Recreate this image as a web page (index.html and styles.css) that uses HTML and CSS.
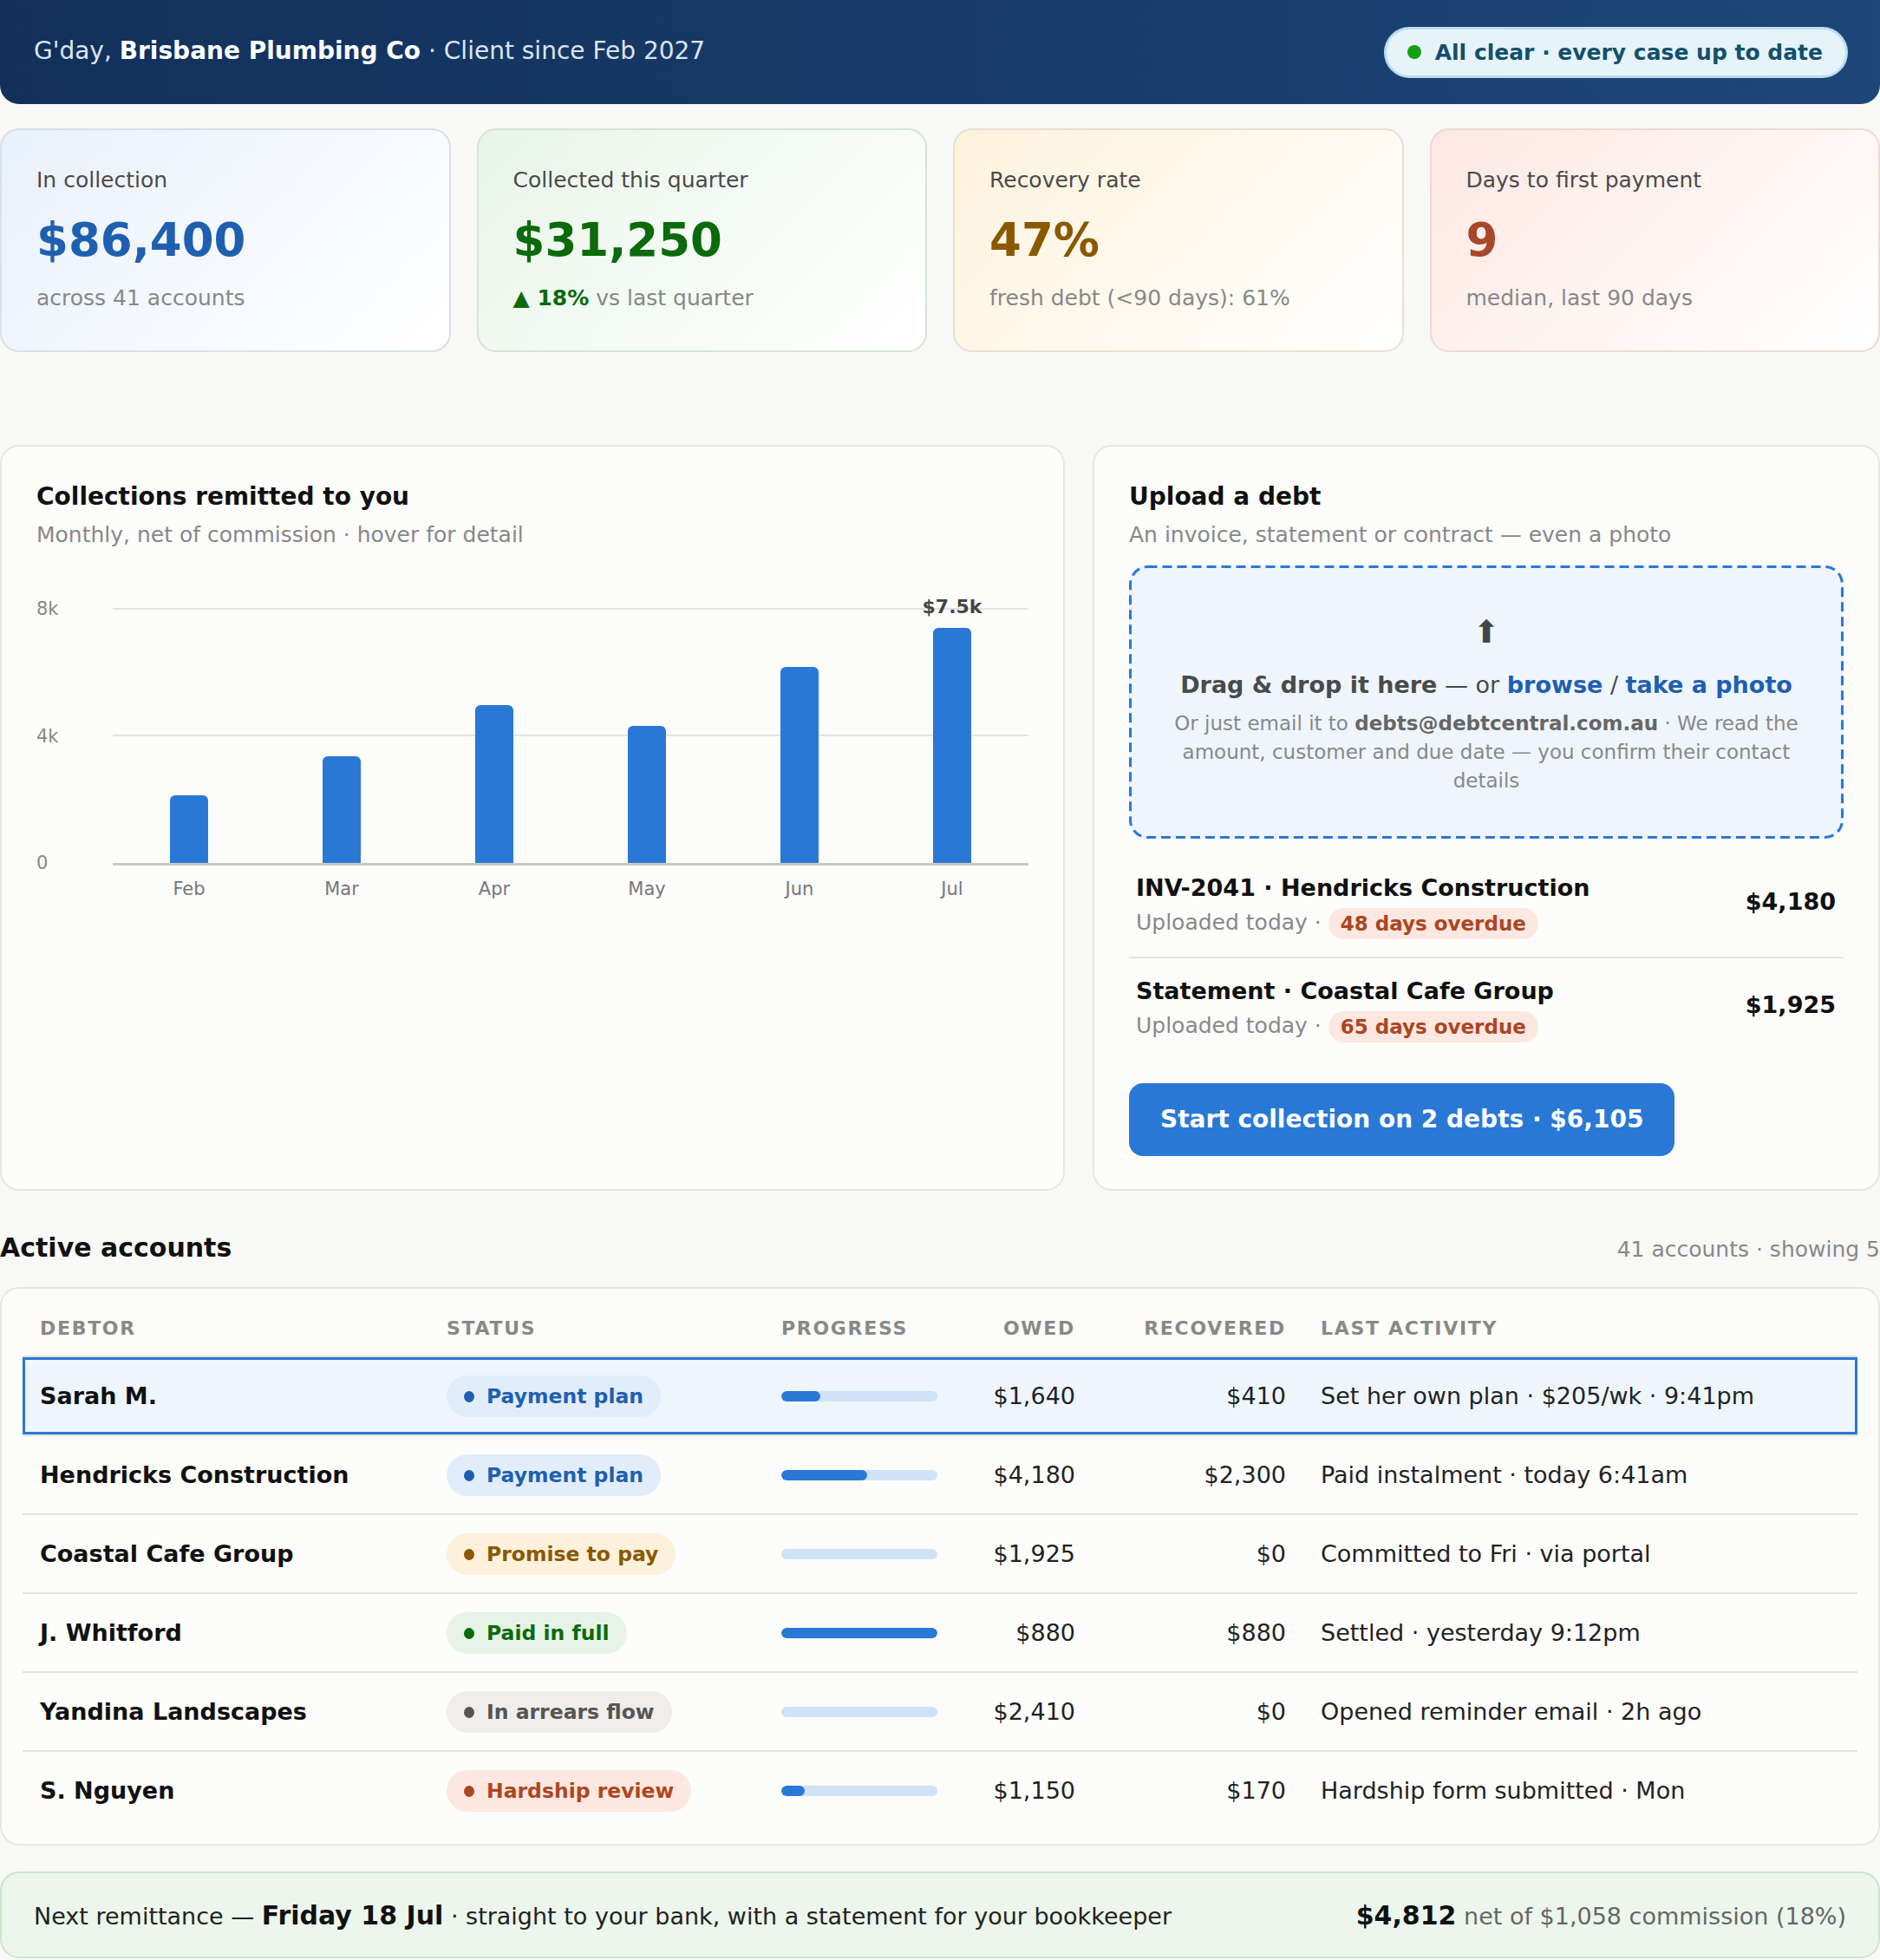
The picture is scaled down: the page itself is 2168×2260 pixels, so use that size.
FILE: index.html
```html
<!DOCTYPE html>
<html>
<head>
   <meta charset="UTF-8">
   <title>Client portal - Brisbane Plumbing Co</title>
   <link rel="stylesheet" href="styles.css">
</head>
<body>
   <header class="topbar">
      <div class="greeting">G'day, <b>Brisbane Plumbing Co</b> · Client since Feb 2027</div>
      <div class="status-pill"><span class="status-dot"></span>All clear · every case up to date</div>
   </header>

   <section class="kpis">
      <div class="kpi kpi-blue">
         <div class="kpi-label">In collection</div>
         <div class="kpi-value">$86,400</div>
         <div class="kpi-sub">across 41 accounts</div>
      </div>
      <div class="kpi kpi-green">
         <div class="kpi-label">Collected this quarter</div>
         <div class="kpi-value">$31,250</div>
         <div class="kpi-sub"><span class="up">▲ 18%</span> vs last quarter</div>
      </div>
      <div class="kpi kpi-amber">
         <div class="kpi-label">Recovery rate</div>
         <div class="kpi-value">47%</div>
         <div class="kpi-sub">fresh debt (&lt;90 days): 61%</div>
      </div>
      <div class="kpi kpi-red">
         <div class="kpi-label">Days to first payment</div>
         <div class="kpi-value">9</div>
         <div class="kpi-sub">median, last 90 days</div>
      </div>
   </section>

   <section class="panels">
      <div class="panel chart-panel">
         <div class="panel-title">Collections remitted to you</div>
         <div class="panel-sub">Monthly, net of commission · hover for detail</div>
         <div class="chart">
            <div class="y-axis">
               <span>8k</span>
               <span>4k</span>
               <span>0</span>
            </div>
            <div class="plot">
               <div class="grid-line grid-top"></div>
               <div class="grid-line grid-mid"></div>
               <div class="bars">
                  <div class="bar-col"><div class="bar" style="height: 26.5%"></div></div>
                  <div class="bar-col"><div class="bar" style="height: 42%"></div></div>
                  <div class="bar-col"><div class="bar" style="height: 62%"></div></div>
                  <div class="bar-col"><div class="bar" style="height: 54%"></div></div>
                  <div class="bar-col"><div class="bar" style="height: 77%"></div></div>
                  <div class="bar-col"><div class="bar" style="height: 92.5%"><span class="bar-tip">$7.5k</span></div></div>
               </div>
            </div>
         </div>
         <div class="months">
            <span>Feb</span><span>Mar</span><span>Apr</span><span>May</span><span>Jun</span><span>Jul</span>
         </div>
      </div>

      <div class="panel upload-panel">
         <div class="panel-title">Upload a debt</div>
         <div class="panel-sub">An invoice, statement or contract — even a photo</div>
         <div class="dropzone">
            <svg class="dash-border" aria-hidden="true"><rect></rect></svg>
            <div class="drop-arrow">⬆</div>
            <div class="drop-main"><b>Drag &amp; drop it here</b> — or <a href="#">browse</a> / <a href="#">take a photo</a></div>
            <p class="drop-note">Or just email it to <b>debts@debtcentral.com.au</b> · We read the amount, customer and due date — you confirm their contact details</p>
         </div>
         <div class="debt-item">
            <div>
               <div class="debt-title">INV-2041 · Hendricks Construction</div>
               <div class="debt-meta">Uploaded today · <span class="tag tag-red">48 days overdue</span></div>
            </div>
            <div class="debt-amount">$4,180</div>
         </div>
         <div class="debt-item">
            <div>
               <div class="debt-title">Statement · Coastal Cafe Group</div>
               <div class="debt-meta">Uploaded today · <span class="tag tag-red">65 days overdue</span></div>
            </div>
            <div class="debt-amount">$1,925</div>
         </div>
         <button class="start-btn">Start collection on 2 debts · $6,105</button>
      </div>
   </section>

   <section class="accounts">
      <div class="accounts-head">
         <h2>Active accounts</h2>
         <span class="accounts-count">41 accounts · showing 5</span>
      </div>
      <div class="table-card">
         <table class="accounts-table">
            <colgroup>
               <col style="width: 469px">
               <col style="width: 386px">
               <col style="width: 219px">
               <col style="width: 160px">
               <col style="width: 243px">
               <col>
            </colgroup>
            <thead>
               <tr>
                  <th>Debtor</th>
                  <th>Status</th>
                  <th>Progress</th>
                  <th class="num">Owed</th>
                  <th class="num">Recovered</th>
                  <th>Last activity</th>
               </tr>
            </thead>
            <tbody>
               <tr class="selected">
                  <td class="debtor">Sarah M.</td>
                  <td><span class="tag tag-blue"><i class="dot"></i>Payment plan</span></td>
                  <td><div class="track"><div class="fill" style="width: 25%"></div></div></td>
                  <td class="num">$1,640</td>
                  <td class="num">$410</td>
                  <td>Set her own plan · $205/wk · 9:41pm</td>
               </tr>
               <tr>
                  <td class="debtor">Hendricks Construction</td>
                  <td><span class="tag tag-blue"><i class="dot"></i>Payment plan</span></td>
                  <td><div class="track"><div class="fill" style="width: 55%"></div></div></td>
                  <td class="num">$4,180</td>
                  <td class="num">$2,300</td>
                  <td>Paid instalment · today 6:41am</td>
               </tr>
               <tr>
                  <td class="debtor">Coastal Cafe Group</td>
                  <td><span class="tag tag-amber"><i class="dot"></i>Promise to pay</span></td>
                  <td><div class="track"><div class="fill" style="width: 0%"></div></div></td>
                  <td class="num">$1,925</td>
                  <td class="num">$0</td>
                  <td>Committed to Fri · via portal</td>
               </tr>
               <tr>
                  <td class="debtor">J. Whitford</td>
                  <td><span class="tag tag-green"><i class="dot"></i>Paid in full</span></td>
                  <td><div class="track"><div class="fill" style="width: 100%"></div></div></td>
                  <td class="num">$880</td>
                  <td class="num">$880</td>
                  <td>Settled · yesterday 9:12pm</td>
               </tr>
               <tr>
                  <td class="debtor">Yandina Landscapes</td>
                  <td><span class="tag tag-grey"><i class="dot"></i>In arrears flow</span></td>
                  <td><div class="track"><div class="fill" style="width: 0%"></div></div></td>
                  <td class="num">$2,410</td>
                  <td class="num">$0</td>
                  <td>Opened reminder email · 2h ago</td>
               </tr>
               <tr>
                  <td class="debtor">S. Nguyen</td>
                  <td><span class="tag tag-red"><i class="dot"></i>Hardship review</span></td>
                  <td><div class="track"><div class="fill" style="width: 15%"></div></div></td>
                  <td class="num">$1,150</td>
                  <td class="num">$170</td>
                  <td>Hardship form submitted · Mon</td>
               </tr>
            </tbody>
         </table>
      </div>
   </section>

   <footer class="remit">
      <div>Next remittance — <b class="remit-date">Friday 18 Jul</b> · straight to your bank, with a statement for your bookkeeper</div>
      <div><b class="remit-amount">$4,812</b> <span class="remit-net">net of $1,058 commission (18%)</span></div>
   </footer>
</body>
</html>
```

FILE: styles.css
```css
body {
   margin: 0;
   background-color: #f8f8f6;
   font-family: "DejaVu Sans", Verdana, sans-serif;
   color: #1a1a1a;
}

/* top bar */
.topbar {
   height: 120px;
   box-sizing: border-box;
   padding: 0 37px 0 39px;
   display: flex;
   align-items: center;
   justify-content: space-between;
   background: linear-gradient(90deg, #12305a, #1d4679);
   border-radius: 0 0 22px 22px;
}
.greeting {
   font-size: 28px;
   color: #dbe5f1;
   margin-top: -4px;
}
.greeting b {
   color: #fff;
}
.status-pill {
   display: flex;
   align-items: center;
   padding: 12px 26px 12px 24px;
   border: 3px solid #bcdcee;
   border-radius: 40px;
   background-color: #e6f3fa;
   color: #12506b;
   font-size: 25px;
   font-weight: bold;
   line-height: 29px;
}
.status-dot {
   width: 16px;
   height: 16px;
   border-radius: 50%;
   background-color: #12a012;
   margin-right: 16px;
}

/* kpi cards */
.kpis {
   display: grid;
   grid-template-columns: repeat(4, 1fr);
   gap: 30px;
   margin-top: 28px;
}
.kpi {
   border: 2px solid #d8e0e8;
   border-radius: 22px;
   padding: 42px 40px 44px 40px;
}
.kpi-blue {
   background: linear-gradient(135deg, #e9f1fc, #ffffff);
}
.kpi-green {
   background: linear-gradient(135deg, #e9f5e9, #ffffff);
   border-color: #d6e4d6;
}
.kpi-amber {
   background: linear-gradient(135deg, #fdf2dc, #ffffff);
   border-color: #eadfcf;
}
.kpi-red {
   background: linear-gradient(135deg, #fde8e3, #ffffff);
   border-color: #ecdad5;
}
.kpi-label {
   font-size: 25px;
   line-height: 32px;
   color: #4a4a4a;
}
.kpi-value {
   font-size: 53px;
   font-weight: bold;
   line-height: 62px;
   margin-top: 22px;
}
.kpi-blue .kpi-value { color: #1f5fb0; }
.kpi-green .kpi-value { color: #0b6a0b; }
.kpi-amber .kpi-value { color: #8a5800; }
.kpi-red .kpi-value { color: #a8472a; }
.kpi-sub {
   font-size: 25px;
   line-height: 32px;
   color: #888;
   margin-top: 20px;
}
.up {
   color: #0b6a0b;
   font-weight: bold;
}

/* chart + upload panels */
.panels {
   display: grid;
   grid-template-columns: 1228px 1fr;
   gap: 32px;
   margin-top: 107px;
}
.panel {
   background-color: #fcfcfb;
   border: 2px solid #e6e6e2;
   border-radius: 22px;
   padding: 40px 40px 38px 40px;
}
.panel-title {
   font-size: 28px;
   line-height: 36px;
   font-weight: bold;
   color: #111;
}
.panel-sub {
   font-size: 25px;
   line-height: 32px;
   color: #888;
   margin-top: 10px;
}

.chart {
   display: flex;
   margin-top: 69px;
}
.y-axis {
   width: 88px;
   height: 319px;
   margin-top: -13px;
   display: flex;
   flex-direction: column;
   justify-content: space-between;
   font-size: 21px;
   line-height: 26px;
   color: #888;
}
.plot {
   flex: 1;
   height: 293px;
   position: relative;
   border-bottom: 3px solid #c9c9c3;
}
.grid-line {
   position: absolute;
   left: 0;
   right: 0;
   height: 2px;
   background-color: #e3e3df;
}
.grid-top { top: -1px; }
.grid-mid { top: 145px; }
.bars {
   display: flex;
   height: 100%;
   position: relative;
}
.bar-col {
   flex: 1;
   display: flex;
   justify-content: center;
   align-items: flex-end;
}
.bar {
   width: 44px;
   background-color: #2a78d6;
   border-radius: 6px 6px 0 0;
   position: relative;
}
.bar-tip {
   position: absolute;
   bottom: 100%;
   left: 50%;
   transform: translateX(-50%);
   margin-bottom: 11px;
   font-size: 22px;
   line-height: 26px;
   font-weight: bold;
   color: #444;
   white-space: nowrap;
}
.months {
   display: flex;
   padding-left: 88px;
   margin-top: 4px;
   font-size: 21px;
   line-height: 26px;
   color: #777;
}
.months span {
   flex: 1;
   text-align: center;
}

.dropzone {
   position: relative;
   margin-top: 19px;
   border: 3px solid transparent;
   border-radius: 20px;
   background-color: #eef5fd;
   padding: 54px 40px 47px 40px;
   text-align: center;
}
.dash-border {
   position: absolute;
   top: -3px;
   left: -3px;
   width: calc(100% + 6px);
   height: calc(100% + 6px);
   pointer-events: none;
}
.dash-border rect {
   x: 1.5px;
   y: 1.5px;
   width: calc(100% - 3px);
   height: calc(100% - 3px);
   rx: 20px;
   fill: none;
   stroke: #2a78d6;
   stroke-width: 3px;
   stroke-dasharray: 11px 6px;
}
.drop-arrow {
   font-size: 36px;
   line-height: 40px;
   color: #444;
}
.drop-main {
   margin-top: 23px;
   font-size: 27px;
   line-height: 35px;
   color: #4a4a4a;
}
.drop-main a {
   color: #1f5fb0;
   font-weight: bold;
   text-decoration: none;
}
.drop-note {
   margin: 11px 0 0 0;
   font-size: 23px;
   line-height: 33px;
   color: #888;
}
.drop-note b {
   color: #666;
}

.debt-item {
   display: flex;
   justify-content: space-between;
   align-items: center;
   padding: 20px 9px 20px 8px;
}
.dropzone + .debt-item {
   margin-top: 19px;
   border-bottom: 2px solid #e3e3df;
}
.debt-title {
   font-size: 27px;
   line-height: 35px;
   font-weight: bold;
   color: #111;
}
.debt-meta {
   margin-top: 5px;
   font-size: 25px;
   line-height: 36px;
   color: #888;
}
.debt-amount {
   font-size: 27px;
   font-weight: bold;
   color: #111;
   margin-bottom: 10px;
}
.tag {
   display: inline-block;
   font-size: 23px;
   font-weight: bold;
   line-height: 28px;
   padding: 4px 14px;
   border-radius: 20px;
   vertical-align: middle;
}
.tag-red {
   background-color: #fde7e1;
   color: #ab4622;
}
.start-btn {
   margin-top: 27px;
   background-color: #2a78d6;
   color: #fff;
   border: none;
   border-radius: 16px;
   padding: 24px 36px;
   font-family: inherit;
   font-size: 28px;
   line-height: 36px;
   font-weight: bold;
   cursor: pointer;
}

/* accounts table */
.accounts-head {
   display: flex;
   justify-content: space-between;
   align-items: baseline;
   margin: 46px 0 26px 0;
}
.accounts-head h2 {
   margin: 0;
   font-size: 30px;
   line-height: 39px;
   color: #111;
}
.accounts-count {
   font-size: 25px;
   color: #888;
}
.table-card {
   background-color: #fcfcfb;
   border: 2px solid #e6e6e2;
   border-radius: 22px;
   padding: 15px 24px 17px 24px;
}
.accounts-table {
   width: 100%;
   table-layout: fixed;
   border-collapse: separate;
   border-spacing: 0;
}
.accounts-table th {
   text-align: left;
   padding: 17px 20px;
   font-size: 22px;
   line-height: 28px;
   letter-spacing: 1.7px;
   text-transform: uppercase;
   color: #888;
   border-bottom: 2px solid #e3e3df;
}
.accounts-table td {
   height: 89px;
   padding: 0 20px;
   font-size: 27px;
   color: #222;
   border-bottom: 2px solid #e3e3df;
   white-space: nowrap;
}
.accounts-table tr:last-child td {
   border-bottom: none;
}
.accounts-table .num {
   text-align: right;
}
.accounts-table td.debtor {
   font-weight: bold;
   color: #111;
}
.selected td {
   background-color: #eef5fd;
   box-shadow: inset 0 3px 0 #2a78d6, inset 0 -3px 0 #2a78d6;
}
.selected td:first-child {
   box-shadow: inset 0 3px 0 #2a78d6, inset 0 -3px 0 #2a78d6, inset 3px 0 0 #2a78d6;
}
.selected td:last-child {
   box-shadow: inset 0 3px 0 #2a78d6, inset 0 -3px 0 #2a78d6, inset -3px 0 0 #2a78d6;
}
.accounts-table .tag {
   line-height: 30px;
   padding: 9px 20px;
   border-radius: 26px;
   font-size: 23.5px;
}
.dot {
   display: inline-block;
   width: 12px;
   height: 13px;
   border-radius: 50%;
   background-color: currentColor;
   margin-right: 14px;
   vertical-align: 1px;
}
.tag-blue {
   background-color: #e2edfb;
   color: #1f5fb0;
}
.tag-amber {
   background-color: #fdf1db;
   color: #8a5800;
}
.tag-green {
   background-color: #e6f3e6;
   color: #0b6a0b;
}
.tag-grey {
   background-color: #efeeec;
   color: #555;
}
.track {
   width: 180px;
   height: 12px;
   border-radius: 6px;
   background-color: #cfe2f8;
   overflow: hidden;
}
.fill {
   height: 100%;
   border-radius: 6px;
   background-color: #2a78d6;
}

/* remittance bar */
.remit {
   margin-top: 30px;
   height: 100px;
   box-sizing: border-box;
   padding: 0 37px 0 37px;
   display: flex;
   align-items: center;
   justify-content: space-between;
   background-color: #ecf6ec;
   border: 2px solid #cde6cd;
   border-radius: 22px;
   font-size: 27px;
   color: #222;
}
.remit-date, .remit-amount {
   font-size: 30px;
   color: #111;
}
.remit-net {
   color: #666;
}
```
